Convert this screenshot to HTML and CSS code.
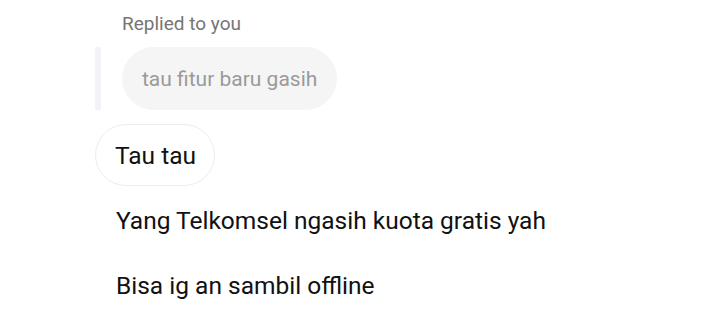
FILE: index.html
```html
<!DOCTYPE html>
<html lang="en">
<head>
    <meta charset="UTF-8">
    <meta name="viewport" content="width=device-width, initial-scale=1.0">
    <title>Chat</title>
    <link rel="stylesheet" href="styles.css">
</head>
<body>
    <div class="thread">
        <div class="reply-label">Replied to you</div>
        <div class="quote">
            <div class="quote-bar"></div>
            <div class="quote-bubble">tau fitur baru gasih</div>
        </div>
        <div class="messages">
            <div class="msg boxed">Tau tau</div>
            <div class="msg">Yang Telkomsel ngasih kuota gratis yah</div>
            <div class="msg">Bisa ig an sambil offline</div>
        </div>
    </div>
</body>
</html>
```

FILE: styles.css
```css
body {
    margin: 0;
    background-color: #ffffff;
    font-family: Roboto, "Noto Sans", sans-serif;
    color: #111111;
}

.thread {
    padding-left: 95px;
    padding-top: 12px;
}

.reply-label {
    margin-left: 27px;
    font-size: 19px;
    line-height: 24px;
    color: #757575;
}

.quote {
    display: flex;
    margin-top: 11px;
    height: 63px;
}

.quote-bar {
    width: 6px;
    background-color: #f2f2f7;
}

.quote-bubble {
    margin-left: 21px;
    padding: 0 20px;
    border-radius: 32px;
    background-color: #f5f5f5;
    color: #9a9a9a;
    font-size: 21px;
    display: flex;
    align-items: center;
}

.messages {
    display: flex;
    flex-direction: column;
    align-items: flex-start;
    gap: 3px;
    margin-top: 14px;
}

.msg {
    height: 62px;
    padding: 0 20px;
    font-size: 24.5px;
    display: flex;
    align-items: center;
    box-sizing: border-box;
    border: 1px solid transparent;
    border-radius: 31px;
}

.msg.boxed {
    padding: 0 18px 0 19px;
    border-color: #ececec;
}
```
